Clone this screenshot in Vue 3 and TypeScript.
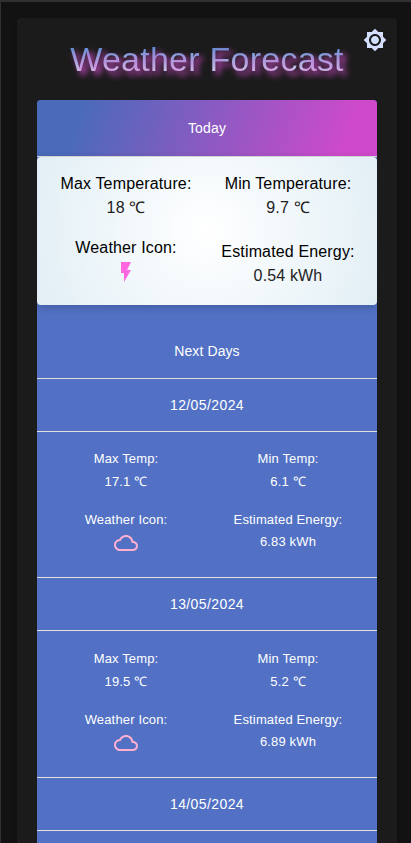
<script setup lang="ts">
interface Forecast {
  date: string
  max?: string
  min?: string
  energy?: string
}

const days: Forecast[] = [
  { date: '12/05/2024', max: '17.1 ℃', min: '6.1 ℃', energy: '6.83 kWh' },
  { date: '13/05/2024', max: '19.5 ℃', min: '5.2 ℃', energy: '6.89 kWh' },
  { date: '14/05/2024' },
]
</script>

<template>
  <div class="page">
    <main class="panel">
      <button class="theme" aria-label="Theme">
        <svg viewBox="0 0 24 24"><path d="M20 8.69V4h-4.69L12 .69 8.69 4H4v4.69L.69 12 4 15.31V20h4.69L12 23.31 15.31 20H20v-4.69L23.31 12 20 8.69zM12 18c-3.31 0-6-2.69-6-6s2.69-6 6-6 6 2.69 6 6-2.69 6-6 6zm0-10c-2.21 0-4 1.79-4 4s1.79 4 4 4 4-1.79 4-4-1.79-4-4-4z" /></svg>
      </button>
      <h1 class="title">Weather Forecast</h1>
      <section class="table">
        <div class="today-head">Today</div>
        <div class="today">
          <div class="col">
            <div class="label">Max Temperature:</div>
            <div class="value">18 ℃</div>
            <div class="label second">Weather Icon:</div>
            <svg class="bolt" viewBox="0 0 24 24"><path d="M7 2v11h3v9l7-12h-4l4-8z" /></svg>
          </div>
          <div class="col">
            <div class="label">Min Temperature:</div>
            <div class="value">9.7 ℃</div>
            <div class="label second low">Estimated Energy:</div>
            <div class="value">0.54 kWh</div>
          </div>
        </div>
        <div class="next">Next Days</div>
        <template v-for="day in days" :key="day.date">
          <div class="date">{{ day.date }}</div>
          <div class="day">
            <template v-if="day.max">
              <div class="col">
                <div>Max Temp:</div>
                <div>{{ day.max }}</div>
                <div class="second">Weather Icon:</div>
                <svg class="cloud" viewBox="0 0 24 24"><path d="M19.35 10.04C18.67 6.59 15.64 4 12 4 9.11 4 6.6 5.64 5.35 8.04 2.34 8.36 0 10.91 0 14c0 3.31 2.69 6 6 6h13c2.76 0 5-2.24 5-5 0-2.64-2.05-4.78-4.65-4.96zM19 18H6c-2.21 0-4-1.79-4-4 0-2.05 1.53-3.76 3.56-3.97l1.07-.11.5-.95C8.08 7.14 9.94 6 12 6c2.62 0 4.88 1.86 5.39 4.43l.3 1.5 1.53.11c1.56.1 2.78 1.41 2.78 2.96 0 1.65-1.35 3-3 3z" /></svg>
              </div>
              <div class="col">
                <div>Min Temp:</div>
                <div>{{ day.min }}</div>
                <div class="second">Estimated Energy:</div>
                <div class="energy">{{ day.energy }}</div>
              </div>
            </template>
          </div>
        </template>
      </section>
    </main>
  </div>
</template>

<style>
body {
  background: #121212;
  overflow: hidden;
}
</style>

<style scoped>
.page {
  box-sizing: border-box;
  height: 843px;
  padding: 16px 14px 0 16px;
  border-top: 2px solid #303033;
  border-left: 1px solid #303033;
  overflow: hidden;
  font-family: "Liberation Sans", Arial, "Open Sans", sans-serif;
}
.panel {
  position: relative;
  box-sizing: border-box;
  height: 1100px;
  padding: 20px;
  border-radius: 4px;
  background: #1b1b1b;
  box-shadow: 0 2px 4px rgba(0, 0, 0, 0.25);
}
.theme {
  position: absolute;
  top: 10px;
  right: 10px;
  width: 24px;
  height: 24px;
  padding: 0;
  border: 0;
  background: none;
}
.theme svg {
  display: block;
  fill: #d4deff;
}
.title {
  margin: 0 0 20px;
  font-size: 34px;
  font-weight: 400;
  line-height: 42px;
  letter-spacing: 0.25px;
  text-align: center;
  color: transparent;
  background: linear-gradient(180deg, #5080cc 15%, #d8e6f2 85%);
  -webkit-background-clip: text;
  background-clip: text;
  text-shadow: 4px 4px 6px rgba(215, 80, 210, 0.95);
}
.table {
  height: 1000px;
  border-radius: 4px;
  background: #5271c4;
  color: #fff;
  text-align: center;
  overflow: hidden;
}
.today-head {
  height: 56px;
  border-bottom: 1px solid #e0e0e0;
  background: linear-gradient(110deg, #4a6aba 13%, #ce4aca 90%);
  font-size: 14px;
  line-height: 56px;
  letter-spacing: 0.15px;
}
.today {
  display: grid;
  grid-template-columns: 1fr 1fr;
  gap: 16px;
  box-sizing: border-box;
  height: 148px;
  padding: 15px 16px 13px;
  border-radius: 4px;
  background: radial-gradient(circle, #fff 0%, #e0eef5 106%);
  box-shadow: 0 2px 8px rgba(0, 0, 0, 0.2);
  font-size: 16px;
  line-height: 24px;
  letter-spacing: 0.15px;
  color: #222;
}
.label {
  color: #000;
  white-space: nowrap;
}
.today .second {
  margin-top: 16px;
}
.today .low {
  margin-top: 20px;
}
.bolt,
.cloud {
  display: block;
  width: 24px;
  height: 24px;
  margin: 0 auto;
}
.bolt {
  fill: #ff66df;
}
.cloud {
  fill: #ffb0d0;
}
.next {
  box-sizing: border-box;
  height: 74px;
  padding-top: 36px;
  border-bottom: 1px solid #e0e0e0;
  font-size: 14px;
  line-height: 20px;
  letter-spacing: 0.1px;
}
.date {
  box-sizing: border-box;
  height: 53px;
  border-bottom: 1px solid #e0e0e0;
  font-size: 14px;
  line-height: 52px;
  letter-spacing: 0.4px;
}
.day {
  display: grid;
  grid-template-columns: 1fr 1fr;
  gap: 16px;
  box-sizing: border-box;
  height: 146.4px;
  padding: 15.3px 16px 0;
  border-bottom: 1px solid #e0e0e0;
  font-size: 13px;
  line-height: 23px;
  letter-spacing: 0.15px;
}
.day .second {
  margin-top: 15px;
}
.day .energy {
  line-height: 21px;
}
</style>
